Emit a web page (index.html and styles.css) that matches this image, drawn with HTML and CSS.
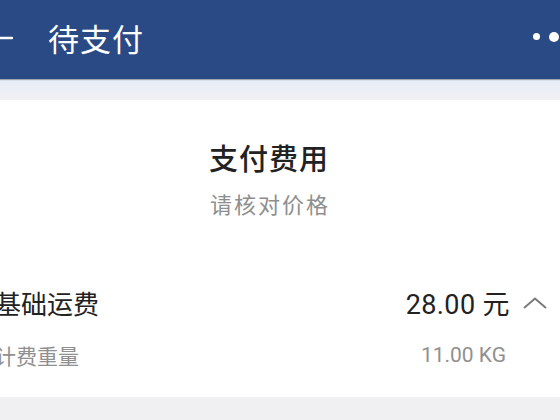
FILE: index.html
```html
<!DOCTYPE html>
<html lang="zh">
<head>
<meta charset="utf-8">
<link rel="stylesheet" href="styles.css">
</head>
<body>
<div class="page">
  <header class="topbar">
    <svg class="back" width="28" height="24" viewBox="0 0 28 24">
      <path d="M2 12 H26 M2 12 L12 2 M2 12 L12 22" stroke="#fff" stroke-width="2.4" fill="none" stroke-linecap="round"/>
    </svg>
    <div class="title">待支付</div>
    <div class="more">
      <span class="dot small"></span>
      <span class="dot big"></span>
      <span class="dot big"></span>
    </div>
  </header>
  <div class="band"></div>
  <section class="card">
    <div class="heading">支付费用</div>
    <div class="sub">请核对价格</div>
    <div class="row main">
      <span class="label">基础运费</span>
      <span class="value">28.00 元</span>
      <svg class="chev" width="26" height="12" viewBox="0 0 26 12">
        <path d="M2 11 L13 1.5 L24 11" stroke="#7a7a7a" stroke-width="2" fill="none"/>
      </svg>
    </div>
    <div class="row minor">
      <span class="label">计费重量</span>
      <span class="value">11.00 KG</span>
    </div>
  </section>
  <div class="bottom"></div>
</div>
</body>
</html>
```
FILE: styles.css
```css
html, body {
  margin: 0;
  padding: 0;
  background: #f0f1f5;
  overflow: hidden;
}
.page {
  width: 560px;
  height: 420px;
  overflow: hidden;
  font-family: "Noto Sans CJK SC", "Noto Sans", sans-serif;
}
.topbar {
  height: 79px;
  background: #2a4a86;
  display: flex;
  align-items: center;
  box-shadow: 0 1px 1px rgba(0,0,0,0.3);
  position: relative;
}
.back {
  margin-left: -14px;
  margin-top: -3px;
  flex: none;
}
.title {
  color: #fff;
  font-size: 31px;
  margin-left: 34px;
  margin-top: -4px;
  flex: 1;
  letter-spacing: 1px;
}
.more {
  display: flex;
  align-items: center;
  gap: 6px;
  margin-right: -15px;
  margin-top: -6px;
}
.dot {
  background: #fff;
  border-radius: 50%;
  display: block;
}
.dot.small { width: 7px; height: 7px; margin-right: 3px; }
.dot.big { width: 10px; height: 10px; }
.band {
  height: 21px;
  background: linear-gradient(#e6ecf5, #f1f1f5);
}
.card {
  background: #fff;
  padding: 38px 0 27px 0;
}
.heading {
  text-align: center;
  font-size: 29px;
  line-height: 38px;
  color: #222;
  font-weight: 500;
  letter-spacing: 1px;
  padding-right: 22px;
}
.sub {
  text-align: center;
  font-size: 22px;
  line-height: 30px;
  color: #8e8e8e;
  margin-top: 12px;
  letter-spacing: 2px;
  padding-right: 20px;
}
.row {
  display: flex;
  align-items: center;
  margin-left: -5px;
}
.row .label { flex: 1; }
.main {
  margin-top: 66px;
  height: 36px;
  font-size: 26px;
  color: #222;
}
.main .value {
  font-family: "Roboto", "Noto Sans CJK SC", sans-serif;
  font-size: 27px;
  letter-spacing: 0.4px;
}
.chev {
  margin-left: 12px;
  margin-right: 12px;
  margin-top: 2px;
}
.minor {
  margin-top: 20px;
  height: 30px;
  font-size: 21px;
  color: #909090;
  padding-right: 54px;
}
.minor .value {
  font-family: "Roboto", "Noto Sans CJK SC", sans-serif;
  font-size: 21px;
  color: #909090;
}
.bottom {
  height: 40px;
  background: #f0f0f3;
}
```
